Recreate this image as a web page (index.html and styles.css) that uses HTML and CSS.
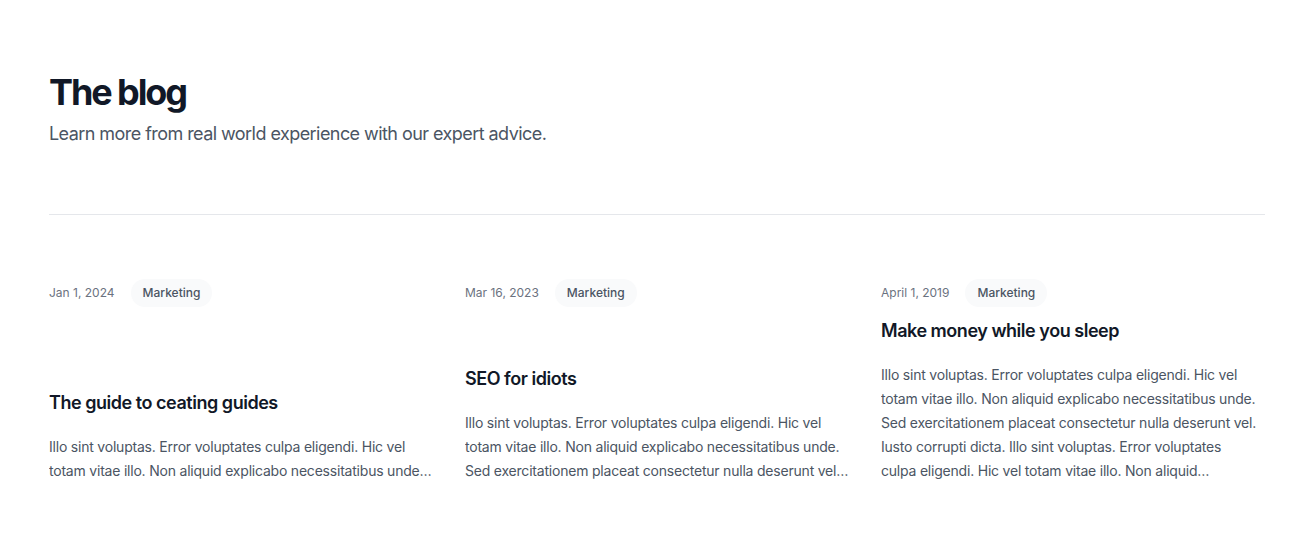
FILE: index.html
```html
<!DOCTYPE html>
<html lang="en">
<head>
<meta charset="utf-8">
<title>The blog</title>
<link rel="stylesheet" href="styles.css">
</head>
<body>
<section class="blog">
  <header class="intro">
    <h2 class="title">The blog</h2>
    <p class="lead">Learn more from real world experience with our expert advice.</p>
  </header>
  <div class="posts">
    <article class="post">
      <div class="meta">
        <time class="date">Jan 1, 2024</time>
        <span class="badge">Marketing</span>
      </div>
      <div class="body">
        <h3 class="post-title">The guide to ceating guides</h3>
        <p class="desc clamp-2">Illo sint voluptas. Error voluptates culpa eligendi. Hic vel totam vitae illo. Non aliquid explicabo necessitatibus unde. Sed exercitationem placeat consectetur nulla deserunt vel. Iusto corrupti dicta.</p>
      </div>
    </article>
    <article class="post">
      <div class="meta">
        <time class="date">Mar 16, 2023</time>
        <span class="badge">Marketing</span>
      </div>
      <div class="body">
        <h3 class="post-title">SEO for idiots</h3>
        <p class="desc clamp-3">Illo sint voluptas. Error voluptates culpa eligendi. Hic vel totam vitae illo. Non aliquid explicabo necessitatibus unde. Sed exercitationem placeat consectetur nulla deserunt vel. Iusto corrupti dicta.</p>
      </div>
    </article>
    <article class="post">
      <div class="meta">
        <time class="date">April 1, 2019</time>
        <span class="badge">Marketing</span>
      </div>
      <div class="body">
        <h3 class="post-title">Make money while you sleep</h3>
        <p class="desc clamp-5">Illo sint voluptas. Error voluptates culpa eligendi. Hic vel totam vitae illo. Non aliquid explicabo necessitatibus unde. Sed exercitationem placeat consectetur nulla deserunt vel. Iusto corrupti dicta. Illo sint voluptas. Error voluptates<br>culpa eligendi. Hic vel totam vitae illo. Non aliquid…</p>
      </div>
    </article>
  </div>
</section>
</body>
</html>
```
FILE: styles.css
```css
* { box-sizing: border-box; }
html, body { margin: 0; padding: 0; background: #ffffff; }
body {
  font-family: Inter, "Noto Sans", "Liberation Sans", sans-serif;
  color: #111827;
  -webkit-font-smoothing: antialiased;
}
.blog {
  padding: 72px 39px 40px 49px;
}
.intro { margin: 0; }
.title {
  margin: 0;
  font-size: 36px;
  line-height: 40px;
  font-weight: 700;
  letter-spacing: -0.058em;
  color: #111827;
}
.lead {
  margin: 8px 0 0;
  font-size: 18px;
  line-height: 28px;
  letter-spacing: -0.031em;
  color: #4b5563;
}
.posts {
  margin-top: 66px;
  padding-top: 64px;
  border-top: 1px solid #e5e7eb;
  display: grid;
  grid-template-columns: repeat(3, 1fr);
  column-gap: 32px;
}
.post {
  display: flex;
  flex-direction: column;
  justify-content: space-between;
}
.meta {
  display: flex;
  align-items: center;
  gap: 16px;
  font-size: 12px;
  line-height: 16px;
}
.date { color: #6b7280; }
.badge {
  background: #f9fafb;
  color: #4b5563;
  font-weight: 500;
  padding: 6px 12px;
  border-radius: 9999px;
}
.post-title {
  margin: 12px 0 0;
  font-size: 18px;
  line-height: 24px;
  font-weight: 600;
  letter-spacing: -0.026em;
  color: #111827;
}
.desc {
  margin: 20px 0 0;
  font-size: 14px;
  line-height: 24px;
  letter-spacing: -0.015em;
  color: #4b5563;
  display: -webkit-box;
  -webkit-box-orient: vertical;
  overflow: hidden;
}
.clamp-2 { -webkit-line-clamp: 2; }
.clamp-3 { -webkit-line-clamp: 3; }
.clamp-5 { -webkit-line-clamp: 5; }
```
